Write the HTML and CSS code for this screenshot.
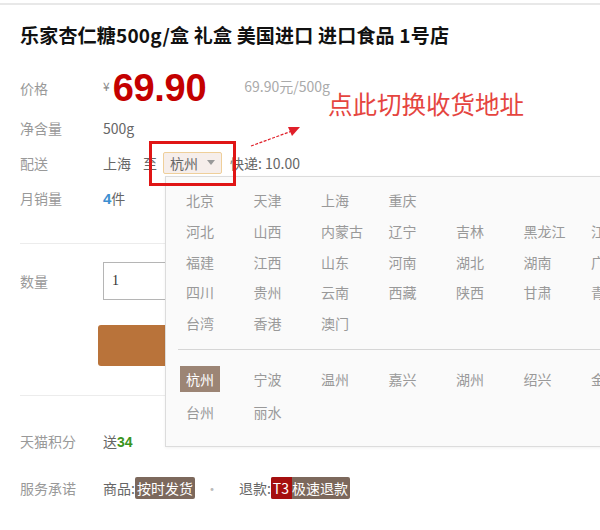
FILE: index.html
```html
<!DOCTYPE html>
<html lang="zh-CN">
<head>
    <meta charset="UTF-8">
    <title>乐家杏仁糖 - 1号店</title>
    <link rel="stylesheet" href="styles.css">
</head>
<body>
    <div class="detail">
        <h1 class="title">乐家杏仁糖500g/盒 礼盒 美国进口 进口食品 1号店</h1>

        <div class="row price-row">
            <span class="label">价格</span>
            <span class="yen">¥</span>
            <strong class="price">69.90</strong>
            <span class="unit-price">69.90元/500g</span>
        </div>
        <div class="row">
            <span class="label">净含量</span>
            <span class="value">500g</span>
        </div>
        <div class="row">
            <span class="label">配送</span>
            <span class="value">上海</span>
            <span class="value to">至</span>
            <span class="city-select">杭州<i class="caret"></i></span>
            <span class="value fee">快递: 10.00</span>
        </div>
        <div class="row">
            <span class="label">月销量</span>
            <span class="value"><b class="sold">4</b>件</span>
        </div>

        <div class="divider"></div>

        <div class="row qty-row">
            <span class="label">数量</span>
            <input class="qty" type="text" value="1">
        </div>
        <div class="buy-btn"></div>

        <div class="divider"></div>

        <div class="row points-row">
            <span class="label">天猫积分</span>
            <span class="value">送<b class="points">34</b></span>
        </div>
        <div class="row service-row">
            <span class="label">服务承诺</span>
            <span class="value">商品:<span class="tag">按时发货</span></span>
            <span class="dot">·</span>
            <span class="value">退款:<span class="tag"><em>T3</em>极速退款</span></span>
        </div>
    </div>

    <!-- 收货地址下拉 -->
    <div class="area-panel">
        <ul class="area-list">
            <li>北京</li><li>天津</li><li>上海</li><li>重庆</li>
            <li class="newline">河北</li><li>山西</li><li>内蒙古</li><li>辽宁</li><li>吉林</li><li>黑龙江</li><li>江苏</li>
            <li>福建</li><li>江西</li><li>山东</li><li>河南</li><li>湖北</li><li>湖南</li><li>广东</li>
            <li>四川</li><li>贵州</li><li>云南</li><li>西藏</li><li>陕西</li><li>甘肃</li><li>青海</li>
            <li>台湾</li><li>香港</li><li>澳门</li>
        </ul>
        <div class="area-line"></div>
        <ul class="area-list city-list">
            <li><span class="on">杭州</span></li><li>宁波</li><li>温州</li><li>嘉兴</li><li>湖州</li><li>绍兴</li><li>金华</li>
            <li>台州</li><li>丽水</li>
        </ul>
    </div>

    <!-- 提示标注 -->
    <div class="tip-frame"></div>
    <svg class="tip-arrow" width="60" height="30" viewBox="0 0 60 30">
        <line x1="1" y1="25" x2="42" y2="10" stroke="#e0202a" stroke-width="1.2" stroke-dasharray="3 1.5"/>
        <polygon points="50,6 38,6 42,15" fill="#e0202a"/>
    </svg>
    <div class="tip-text">点此切换收货地址</div>
</body>
</html>
```

FILE: styles.css
```css
html, body {
    overflow: hidden;
}

body {
    margin: 0;
    padding-top: 3px;
    background: #fff;
    color: #666;
    font-family: "Noto Sans CJK SC", "Liberation Sans", sans-serif;
    font-size: 14px;
}

.detail {
    border-top: 2px solid #e8e8e8;
    padding: 0 20px;
}

.title {
    margin: 18px 0 0;
    font-size: 19px;
    line-height: 24px;
    font-weight: bold;
    color: #111;
    letter-spacing: 0.2px;
}

.row {
    display: flex;
    align-items: center;
    height: 35px;
}

.label {
    width: 83px;
    flex-shrink: 0;
    color: #999;
}

.value {
    color: #666;
}

.price-row {
    height: 44px;
    margin-top: 19px;
}

.yen {
    font-size: 12px;
    color: #888;
    margin-right: 3px;
    align-self: center;
    padding-bottom: 6px;
}

.price {
    font-family: "Liberation Sans", Arial, sans-serif;
    font-size: 38px;
    line-height: 40px;
    color: #c40000;
    letter-spacing: -0.3px;
}

.unit-price {
    margin-left: 38px;
    font-size: 14px;
    color: #aaa;
    padding-bottom: 4px;
}

.to {
    margin-left: 12px;
}

.city-select {
    display: flex;
    align-items: center;
    height: 20px;
    margin-left: 6px;
    padding: 0 6px;
    border: 1px solid #efcf9a;
    border-radius: 2px;
    background: #f6eeeb;
    color: #666;
}

.caret {
    margin-left: 9px;
    border-left: 4px solid transparent;
    border-right: 4px solid transparent;
    border-top: 5px solid #999;
}

.fee {
    margin-left: 8px;
}

.sold {
    color: #3d8fd1;
    font-family: "Liberation Sans", Arial, sans-serif;
    font-size: 15px;
}

.divider {
    height: 1px;
    background: #ececec;
    margin-top: 28px;
}

.qty-row {
    height: 38px;
    margin-top: 18px;
}

.qty {
    box-sizing: border-box;
    width: 120px;
    height: 38px;
    padding: 0 8px;
    border: 1px solid #b5b5b5;
    font-family: "Liberation Serif", serif;
    font-size: 14px;
    color: #333;
}

.buy-btn {
    width: 160px;
    height: 41px;
    margin: 25px 0 0 78px;
    background: #b9733a;
    border-radius: 3px;
}

.buy-btn + .divider {
    margin-top: 29px;
}

.points-row {
    margin-top: 27px;
}

.points {
    color: #3a9420;
    font-family: "Liberation Sans", Arial, sans-serif;
}

.service-row {
    margin-top: 12px;
}

.tag {
    background: #7c685c;
    color: #fff;
    padding: 1px 2px;
    border-radius: 2px;
}

.tag em {
    font-style: normal;
    background: #a50f0f;
    padding: 1px 3px 1px 2px;
    margin-left: -2px;
    border-radius: 2px 0 0 2px;
}

.dot {
    margin: 0 20px 0 10px;
    color: #bbb;
}

/* 地址下拉面板 */
.area-panel {
    position: absolute;
    left: 165px;
    top: 176px;
    width: 470px;
    height: 269px;
    background: #fafafa;
    border: 1px solid #dcdcdc;
    box-shadow: 0 1px 3px rgba(0, 0, 0, 0.06);
}

.area-list {
    display: grid;
    grid-template-columns: repeat(7, 67.5px);
    margin: 0;
    padding: 8px 0 0 20px;
    list-style: none;
    color: #999;
    line-height: 30.8px;
}

.area-list .newline {
    grid-column: 1;
}

.area-line {
    height: 1px;
    margin: 10px 0 0 12px;
    background: #d6d6d6;
}

.city-list {
    padding-top: 13px;
    line-height: 33px;
}

.city-list .on {
    background: #9c8575;
    color: #fff;
    padding: 3px 6px;
    margin-left: -6px;
}

/* 标注 */
.tip-frame {
    position: absolute;
    left: 149px;
    top: 141px;
    width: 81px;
    height: 39px;
    border: 3px solid #e01515;
}

.tip-arrow {
    position: absolute;
    left: 250px;
    top: 121px;
}

.tip-text {
    position: absolute;
    left: 328px;
    top: 89px;
    font-size: 24.5px;
    line-height: 30px;
    color: #e5453f;
}
```
